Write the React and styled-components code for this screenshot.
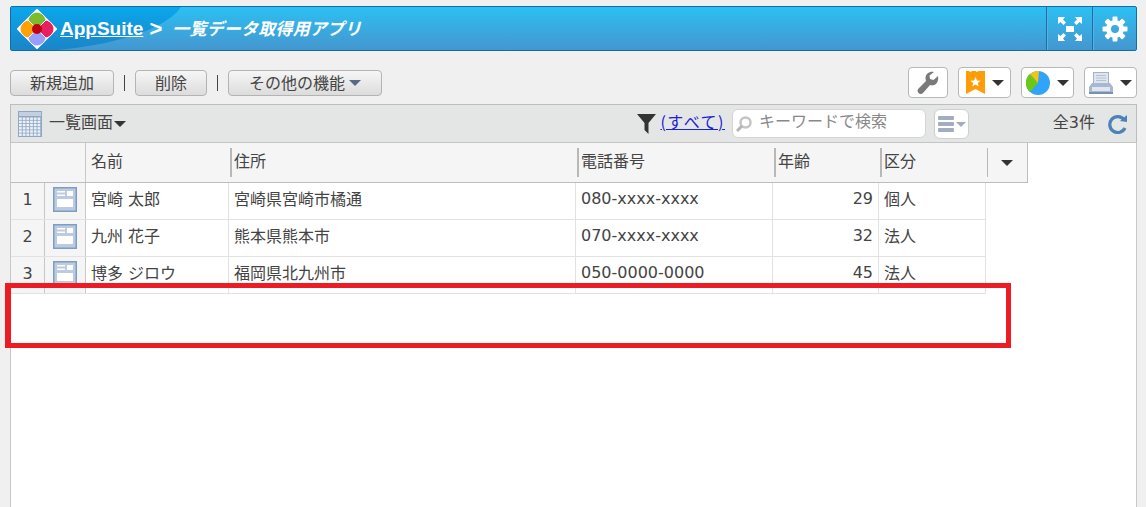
import React from "react";
import styled, { createGlobalStyle } from "styled-components";

const GlobalStyle = createGlobalStyle`
  html, body {
    margin: 0;
    height: 507px;
    overflow: hidden;
    background: #f0f0f0;
    color: #333;
    font-family: "DejaVu Sans", "Noto Sans CJK JP", sans-serif;
    font-size: 16px;
  }
  * { box-sizing: border-box; }
`;

// header dividers sit a pixel or two off the body columns in the original
const headerColumns = "34px 40px 145px 347px 197px 106px 107px 40px";
const bodyColumns = "34px 40px 143px 347px 197px 106px 108px";

const rows = [
  { no: 1, name: "宮崎 太郎", address: "宮崎県宮崎市橘通", tel: "080-xxxx-xxxx", age: 29, kind: "個人" },
  { no: 2, name: "九州 花子", address: "熊本県熊本市", tel: "070-xxxx-xxxx", age: 32, kind: "法人" },
  { no: 3, name: "博多 ジロウ", address: "福岡県北九州市", tel: "050-0000-0000", age: 45, kind: "法人" },
];

const Logo = () => (
  <svg width="40" height="40" viewBox="0 0 40 40">
    <path d="M20 1 L39 20 L20 39 L1 20 Z" fill="#fff" stroke="#fff" strokeWidth="2" strokeLinejoin="round" />
    <g stroke="#fff" strokeWidth="1">
      <path d="M20 3 C25 3 29 9 29 11 L20 20 L11 11 C11 9 15 3 20 3 Z" fill="#7dbb2e" />
      <path d="M3 20 C3 15 9 11 11 11 L20 20 L11 29 C9 29 3 25 3 20 Z" fill="#ffa006" />
      <path d="M37 20 C37 15 31 11 29 11 L20 20 L29 29 C31 29 37 25 37 20 Z" fill="#e8205f" />
      <path d="M20 37 C25 37 29 31 29 29 L20 20 L11 29 C11 31 15 37 20 37 Z" fill="#9a9dfb" />
    </g>
    <circle cx="20" cy="20" r="5" fill="#c00010" />
  </svg>
);

const ExpandIcon = () => (
  <svg width="26" height="26" viewBox="0 0 26 26" fill="#fff">
    <rect x="9" y="10" width="8" height="6" />
    <path d="M1 1 H8 L6 3.5 L9 6.5 L6.5 9 L3.5 6 L1 8 Z" />
    <path d="M25 1 H18 L20 3.5 L17 6.5 L19.5 9 L22.5 6 L25 8 Z" />
    <path d="M1 25 H8 L6 22.5 L9 19.5 L6.5 17 L3.5 20 L1 18 Z" />
    <path d="M25 25 H18 L20 22.5 L17 19.5 L19.5 17 L22.5 20 L25 18 Z" />
  </svg>
);

const GearIcon = () => (
  <svg width="26" height="26" viewBox="0 0 26 26">
    <g fill="#fff">
      {[0, 45, 90, 135, 180, 225, 270, 315].map((a) => (
        <rect key={a} x="10.5" y="0.5" width="5" height="7" rx="1" transform={`rotate(${a} 13 13)`} />
      ))}
    </g>
    <circle cx="13" cy="13" r="6.5" fill="none" stroke="#fff" strokeWidth="5" />
  </svg>
);

const WrenchIcon = () => (
  <svg width="22" height="24" viewBox="0 0 22 24">
    <path
      d="M21 5 L16.5 9 L13 8 L12.5 4.5 L17 1 C13 0 8.5 2.5 8.5 7 C8.5 8.5 9 9.5 9 10 L1.5 17.5 C0 19 0.5 21 1.5 22 C3 23.5 5 23 6 22 L13 14 C14 14.3 15 14.5 16 14.3 C19.5 14 22 10 21 5 Z"
      fill="#7a7a7a"
    />
  </svg>
);

const BookmarkIcon = () => (
  <svg width="19" height="23" viewBox="0 0 19 23">
    <path d="M0 0 H3 L4.5 1 L6 0 H9.5 L11 1 L12.5 0 H19 V23 L9.5 18 L0 23 Z" fill="#ff9c08" />
    <path d="M9.5 6 L11 9.5 L14.5 9.8 L11.8 12 L12.7 15.5 L9.5 13.6 L6.3 15.5 L7.2 12 L4.5 9.8 L8 9.5 Z" fill="#fff" />
  </svg>
);

const PieIcon = () => (
  <svg width="24" height="24" viewBox="0 0 24 24">
    <circle cx="12" cy="12" r="12" fill="#2fa4f8" />
    <path d="M12 12 L4 21 A12 12 0 0 1 4 3 Z" fill="#6cc817" />
    <path d="M12 12 L4 3 A12 12 0 0 1 13 0 Z" fill="#f3c416" />
  </svg>
);

const PrinterIcon = () => (
  <svg width="24" height="22" viewBox="0 0 24 22">
    <rect x="4.5" y="0.5" width="15" height="12" fill="#dfe5ee" stroke="#a4b2c6" />
    <path d="M7 3.5 H17 M7 6 H17 M7 8.5 H17" stroke="#b6c2d2" />
    <path d="M3 11 H21 L24 15 V22 H0 V15 Z" fill="#a8b8d0" />
    <rect x="3" y="15" width="18" height="4" fill="#dfe6f0" />
    <path d="M0 21 H24" stroke="#7a90b0" strokeWidth="2" />
  </svg>
);

const GridIcon = () => (
  <svg width="24" height="26" viewBox="0 0 24 26">
    <rect width="24" height="26" fill="#8ea7c6" />
    <rect x="1" y="1" width="22" height="4" fill="#c4d0e0" />
    {[0, 1, 2, 3, 4, 5].map((r) =>
      [0, 1, 2, 3, 4, 5].map((c) => (
        <rect key={`${r}-${c}`} x={1 + c * 3.7} y={6.5 + r * 3.2} width="2.8" height="2.4" fill="#eef2f7" />
      ))
    )}
  </svg>
);

const FunnelIcon = () => (
  <svg width="19" height="20" viewBox="0 0 19 20">
    <path d="M0 0 H19 L11.5 9 V20 L7.5 16 V9 Z" fill="#333" />
  </svg>
);

const SearchIcon = () => (
  <svg width="18" height="18" viewBox="0 0 18 18">
    <circle cx="10.5" cy="7.5" r="5" fill="none" stroke="#c4c4c4" strokeWidth="2.5" />
    <path d="M7 11 L2 16" stroke="#b5b5b5" strokeWidth="3" />
  </svg>
);

const MenuIcon = () => (
  <svg width="28" height="18" viewBox="0 0 28 18" fill="#a3adc0">
    <rect x="0" y="1" width="16" height="4" rx="1" />
    <rect x="0" y="7" width="16" height="4" rx="1" />
    <rect x="0" y="13" width="16" height="4" rx="1" />
    <path d="M18 7 H28 L23 12 Z" />
  </svg>
);

const RefreshIcon = () => (
  <svg width="20" height="20" viewBox="0 0 20 20">
    <path d="M16 5.5 A8 8 0 1 0 17 14" fill="none" stroke="#4b82b8" strokeWidth="3.2" />
    <path d="M12 7 L19 1 V8 Z" fill="#4b82b8" />
  </svg>
);

const RecordIcon = () => (
  <svg width="24" height="25" viewBox="0 0 24 25">
    <rect width="24" height="25" fill="#7b9fc4" />
    <rect x="1.5" y="1.5" width="21" height="22" fill="#bccbe0" />
    <rect x="4" y="4" width="8" height="1.5" fill="#fff" />
    <rect x="4" y="7.5" width="8" height="1.5" fill="#fff" />
    <rect x="14" y="4" width="6" height="5" fill="#fff" />
    <rect x="4" y="12" width="16" height="8" fill="#fff" />
  </svg>
);

const App = () => {
  return (
    <>
      <GlobalStyle />
      <Page>
        <Header>
          <Brand>
            <Logo />
            <AppLink>AppSuite</AppLink>
            <Arrow>&gt;</Arrow>
            <Title>一覧データ取得用アプリ</Title>
          </Brand>
          <HeaderButton $width={46}><ExpandIcon /></HeaderButton>
          <HeaderButton $width={44}><GearIcon /></HeaderButton>
        </Header>

        <Toolbar>
          <ActionGroup>
            <ActionButton $width={104}>新規追加</ActionButton>
            <Separator />
            <ActionButton $width={72}>削除</ActionButton>
            <Separator />
            <ActionButton $width={154}>
              その他の機能<ActionCaret />
            </ActionButton>
          </ActionGroup>
          <ToolGroup>
            <ToolButton $width={40}><WrenchIcon /></ToolButton>
            <ToolButton $width={53}><BookmarkIcon /><Caret /></ToolButton>
            <ToolButton $width={53}><PieIcon /><Caret /></ToolButton>
            <ToolButton $width={53}><PrinterIcon /><Caret /></ToolButton>
          </ToolGroup>
        </Toolbar>

        <Panel>
          <PanelBar>
            <ViewSelect>
              <GridIcon />
              <ViewName>一覧画面</ViewName>
              <Caret />
            </ViewSelect>
            <FilterGroup>
              <FunnelIcon />
              <FilterLink>(すべて)</FilterLink>
              <SearchBox>
                <SearchIcon />
                <Placeholder>キーワードで検索</Placeholder>
              </SearchBox>
              <MenuButton><MenuIcon /></MenuButton>
            </FilterGroup>
            <CountGroup>
              <CountText>全3件</CountText>
              <RefreshIcon />
            </CountGroup>
          </PanelBar>

          <HeaderRow>
            <HeaderCell />
            <HeaderCell />
            <HeaderCell $first>名前</HeaderCell>
            <HeaderCell $divider>住所</HeaderCell>
            <HeaderCell $divider>電話番号</HeaderCell>
            <HeaderCell $divider>年齢</HeaderCell>
            <HeaderCell $divider>区分</HeaderCell>
            <SortCell><Caret /></SortCell>
          </HeaderRow>

          {rows.map((row) => (
            <Row key={row.no}>
              <NumberCell>{row.no}</NumberCell>
              <IconCell><RecordIcon /></IconCell>
              <Cell>{row.name}</Cell>
              <Cell>{row.address}</Cell>
              <Cell>{row.tel}</Cell>
              <Cell $right>{row.age}</Cell>
              <Cell>{row.kind}</Cell>
            </Row>
          ))}
        </Panel>

        <Highlight />
      </Page>
    </>
  );
};

export default App;

const Page = styled.div`
  position: relative;
  height: 507px;
  padding: 6px 9px 0 10px;
  display: flex;
  flex-direction: column;
`;

const Header = styled.header`
  position: relative;
  height: 45px;
  display: flex;
  flex-shrink: 0;
  border: 1px solid #0f6ea6;
  border-radius: 2px;
  background: linear-gradient(#2cc0f3, #4596cf);
  overflow: hidden;
  &:before {
    content: "";
    position: absolute;
    left: -176px;
    top: -69px;
    width: 350px;
    height: 114px;
    border-radius: 50%;
    background: linear-gradient(#0aa8ec 68px, #1a85c8 112px);
  }
`;

const Brand = styled.div`
  position: relative;
  flex: 1;
  display: flex;
  align-items: center;
  padding-left: 6px;
  color: #fff;
`;

const AppLink = styled.a`
  margin-left: 3px;
  font-family: "Liberation Sans", sans-serif;
  font-size: 19px;
  font-weight: 700;
  text-decoration: underline;
`;

const Arrow = styled.span`
  margin-left: 6px;
  font-family: "Liberation Sans", sans-serif;
  font-size: 22px;
  font-weight: 700;
`;

const Title = styled.span`
  margin-left: 10px;
  padding-bottom: 3px;
  font-family: "Noto Sans CJK JP", sans-serif;
  font-size: 17px;
  font-weight: 700;
  font-style: italic;
  letter-spacing: 0.2px;
`;

const HeaderButton = styled.div`
  position: relative;
  width: ${(p) => p.$width}px;
  display: flex;
  align-items: center;
  justify-content: center;
  border-left: 1px solid #1b6fa8;
  box-shadow: inset 1px 0 0 #56b4e2;
`;

const Toolbar = styled.div`
  height: 53px;
  flex-shrink: 0;
  display: flex;
  align-items: center;
  justify-content: space-between;
  padding-top: 10px;
`;

const ActionGroup = styled.div`
  display: flex;
  align-items: center;
  margin-top: 1px;
`;

const ActionButton = styled.div`
  width: ${(p) => p.$width}px;
  height: 26px;
  display: flex;
  align-items: center;
  justify-content: center;
  padding-bottom: 3px;
  border: 1px solid #b4b4b4;
  border-radius: 4px;
  background: linear-gradient(#f6f6f6, #dcdcdc);
  font-family: "Noto Sans CJK JP", sans-serif;
  font-size: 16px;
  color: #444;
`;

const Separator = styled.span`
  width: 1px;
  height: 16px;
  margin: 0 10px;
  background: #444;
`;

const ActionCaret = styled.span`
  margin: 3px 0 0 4px;
  border-style: solid;
  border-width: 6px 6px 0;
  border-color: #5a6a85 transparent transparent;
`;

const ToolGroup = styled.div`
  display: flex;
  gap: 10px;
`;

const ToolButton = styled.div`
  width: ${(p) => p.$width}px;
  height: 31px;
  display: flex;
  align-items: center;
  justify-content: center;
  gap: 7px;
  background: #fff;
  border: 1px solid #b8b8b8;
  border-radius: 4px;
`;

const Caret = styled.span`
  display: inline-block;
  border-style: solid;
  border-width: 6px 6px 0;
  border-color: #333 transparent transparent;
`;

const Panel = styled.section`
  flex: 1;
  background: #fff;
  border-left: 1px solid #c8c8c8;
  border-right: 1px solid #c8c8c8;
`;

const PanelBar = styled.div`
  height: 39px;
  margin-left: -1px;
  margin-right: -1px;
  display: flex;
  align-items: center;
  padding: 0 8px 0 7px;
  background: #e4e5e5;
  border: 1px solid #bdbdbd;
  border-bottom-color: #c4c4c4;
`;

const ViewSelect = styled.div`
  flex: 1;
  display: flex;
  align-items: center;
`;

const ViewName = styled.span`
  margin: 0 1px 0 7px;
  padding-bottom: 6px;
  font-family: "Noto Sans CJK JP", sans-serif;
  font-size: 16px;
  color: #444;
`;

const FilterGroup = styled.div`
  display: flex;
  align-items: center;
`;

const FilterLink = styled.a`
  margin-left: 4px;
  padding-bottom: 5px;
  color: #1a22d8;
  text-decoration: underline;
  font-family: "Noto Sans CJK JP", sans-serif;
  font-size: 16px;
  letter-spacing: 1.5px;
`;

const SearchBox = styled.div`
  width: 194px;
  height: 29px;
  margin-left: 7px;
  display: flex;
  align-items: center;
  gap: 6px;
  padding-left: 2px;
  background: #fff;
  border: 1px solid #d5d5d5;
  border-radius: 6px;
`;

const Placeholder = styled.span`
  padding-bottom: 8px;
  color: #888;
  font-family: "Noto Sans CJK JP", sans-serif;
  font-size: 16px;
`;

const MenuButton = styled.div`
  width: 35px;
  height: 30px;
  margin-left: 8px;
  display: flex;
  align-items: center;
  justify-content: center;
  background: #fff;
  border: 1px solid #cfcfcf;
  border-radius: 6px;
`;

const CountGroup = styled.div`
  width: 159px;
  display: flex;
  align-items: center;
  justify-content: flex-end;
  gap: 13px;
`;

const CountText = styled.span`
  padding-bottom: 5px;
  font-size: 16px;
  color: #444;
`;

const HeaderRow = styled.div`
  width: 1017px;
  height: 40px;
  display: grid;
  grid-template-columns: ${headerColumns};
  background: #f5f5f5;
  border-bottom: 1px solid #bdbdbd;
  border-right: 1px solid #bdbdbd;
`;

const HeaderCell = styled.div`
  position: relative;
  display: flex;
  align-items: center;
  padding: 0 0 6px ${(p) => (p.$first ? 5 : 4)}px;
  border-left: ${(p) => (p.$first ? "1px solid #c8c8c8" : "none")};
  color: #444;
  font-family: "Noto Sans CJK JP", sans-serif;
  font-size: 16px;
  ${(p) => p.$divider && `
    &:before {
      content: "";
      position: absolute;
      left: 0;
      top: 5px;
      bottom: 5px;
      width: 2px;
      background: #b8b8b8;
    }
  `}
`;

const SortCell = styled.div`
  position: relative;
  display: flex;
  align-items: center;
  justify-content: center;
  &:before {
    content: "";
    position: absolute;
    left: 0;
    top: 5px;
    bottom: 5px;
    width: 1px;
    background: #b8b8b8;
  }
`;

const Row = styled.div`
  width: 975px;
  height: 37px;
  display: grid;
  grid-template-columns: ${bodyColumns};
  border-bottom: 1px solid #e2e2e2;
  overflow: hidden;
`;

const Cell = styled.div`
  display: flex;
  align-items: center;
  justify-content: ${(p) => (p.$right ? "flex-end" : "flex-start")};
  padding: 0 5px 6px 5px;
  border-left: 1px solid #e2e2e2;
  font-size: 16px;
  white-space: pre;
  color: #444;
  &:last-child {
    border-right: 1px solid #e2e2e2;
  }
`;

const NumberCell = styled.div`
  display: flex;
  align-items: center;
  justify-content: center;
  padding-bottom: 3px;
  background: #f5f5f5;
  border-right: 1px solid #c8c8c8;
  font-size: 16px;
  color: #444;
`;

const IconCell = styled.div`
  position: relative;
  display: flex;
  align-items: center;
  justify-content: center;
  margin-right: -1px;
  padding-bottom: 3px;
  background: #f5f5f5;
  border-right: 1px solid #c8c8c8;
`;

const Highlight = styled.div`
  position: absolute;
  left: 5px;
  top: 283px;
  width: 1006px;
  height: 65px;
  border: 5px solid #ed1c24;
  border-left-width: 6px;
`;
